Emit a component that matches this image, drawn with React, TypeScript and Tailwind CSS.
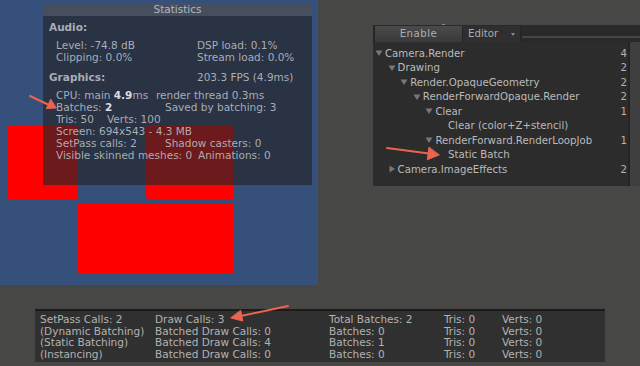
import React from "react";

const font = { fontFamily: '"DejaVu Sans", Verdana, sans-serif' };

function Tri({ open = true }: { open?: boolean }) {
  return (
    <svg width="8" height="8" viewBox="0 0 8 8" className="shrink-0">
      {open ? <path d="M0.5 1.5 L7.5 1.5 L4 7 Z" fill="#777777" /> : <path d="M1.5 0.5 L7 4 L1.5 7.5 Z" fill="#777777" />}
    </svg>
  );
}

const rows: { label: string; level: number; num?: string; tri?: "open" | "closed" }[] = [
  { label: "Camera.Render", level: 0, num: "4", tri: "open" },
  { label: "Drawing", level: 1, num: "2", tri: "open" },
  { label: "Render.OpaqueGeometry", level: 2, num: "2", tri: "open" },
  { label: "RenderForwardOpaque.Render", level: 3, num: "2", tri: "open" },
  { label: "Clear", level: 4, num: "1", tri: "open" },
  { label: "Clear (color+Z+stencil)", level: 5 },
  { label: "RenderForward.RenderLoopJob", level: 4, num: "1", tri: "open" },
  { label: "Static Batch", level: 5 },
  { label: "Camera.ImageEffects", level: 1, num: "2", tri: "closed" },
];

const bottomRows = [
  ["SetPass Calls: 2", "Draw Calls: 3", "Total Batches: 2", "Tris: 0", "Verts: 0"],
  ["(Dynamic Batching)", "Batched Draw Calls: 0", "Batches: 0", "Tris: 0", "Verts: 0"],
  ["(Static Batching)", "Batched Draw Calls: 4", "Batches: 1", "Tris: 0", "Verts: 0"],
  ["(Instancing)", "Batched Draw Calls: 0", "Batches: 0", "Tris: 0", "Verts: 0"],
];

function StatLine({ left, right, w }: { left: React.ReactNode; right?: React.ReactNode; w?: string }) {
  return (
    <div className="flex h-[12px] leading-[12px] whitespace-nowrap">
      <span className={w}>{left}</span>
      {right && <span>{right}</span>}
    </div>
  );
}

export default function App() {
  return (
    <div className="relative w-[640px] h-[366px] bg-[#474846] overflow-hidden" style={font}>
      <div className="flex h-[285px]">
        {/* game view */}
        <div className="relative w-[318px] h-[285px] bg-[#34507b] shrink-0">
          <div className="absolute left-[7px] top-[125px] w-[70px] h-[75px] bg-[#ff0000] rounded-b-[2px]" />
          <div className="absolute left-[146px] top-[125px] w-[87px] h-[74px] bg-[#ff0000] rounded-bl-[3px]" />
          <div className="absolute left-[77px] top-[203px] w-[79px] h-[70px] bg-[#ff0000] rounded-l-[3px]" />
          <div className="absolute left-[156px] top-[203px] w-[77px] h-[70px] bg-[#ff0000]" />

          {/* statistics overlay */}
          <div className="absolute left-[43px] top-[3px] w-[269px] h-[182px] bg-[rgba(38,39,42,0.68)] text-[10.5px] text-[rgba(205,210,218,0.78)]">
            <div className="h-[13px] leading-[13px] text-center bg-[rgba(100,108,122,0.5)] text-[rgba(205,210,218,0.82)]">Statistics</div>
            <div className="pt-[5px] pl-[6px]">
              <div className="h-[12px] leading-[12px] font-bold">Audio:</div>
              <div className="pl-[7px] mt-[6px]">
                <StatLine w="w-[141px]" left="Level: -74.8 dB" right="DSP load: 0.1%" />
                <StatLine w="w-[141px]" left="Clipping: 0.0%" right="Stream load: 0.0%" />
              </div>
              <div className="flex h-[12px] leading-[12px] mt-[8px]">
                <span className="w-[148px] font-bold">Graphics:</span>
                <span>203.3 FPS (4.9ms)</span>
              </div>
              <div className="pl-[7px] mt-[6px]">
                <StatLine
                  w="w-[100px]"
                  left={
                    <>
                      CPU: main <b className="text-[#dadde2]">4.9</b>ms
                    </>
                  }
                  right="render thread 0.3ms"
                />
                <StatLine
                  w="w-[109px]"
                  left={
                    <>
                      Batches: <b className="text-[#dadde2]">2</b>
                    </>
                  }
                  right="Saved by batching: 3"
                />
                <StatLine w="w-[51px]" left="Tris: 50" right="Verts: 100" />
                <StatLine left="Screen: 694x543 - 4.3 MB" />
                <StatLine w="w-[109px]" left="SetPass calls: 2" right="Shadow casters: 0" />
                <StatLine w="w-[142px]" left="Visible skinned meshes: 0" right="Animations: 0" />
              </div>
            </div>
          </div>
        </div>

        {/* profiler hierarchy */}
        <div className="flex-1 pl-[55px] pt-[25px]">
          <div className="relative h-[1px] w-full bg-[#2a2a2a]">
            <div className="absolute left-[69px] -top-[1px] w-[3px] h-[1px] bg-[#8a8a8a]" />
          </div>
          <div className="flex h-[16px] bg-[#262626] text-[10.2px] text-[#acacac]">
            <div className="w-[87px] ml-[2px] h-full flex items-center justify-center bg-gradient-to-b from-[#4b4b4b] to-[#393939] tracking-[0.5px]">
              Enable
            </div>
            <div className="w-[57px] ml-[1px] h-full flex items-center pl-[5px] bg-[#2f2f2f] relative">
              Editor
              <span className="absolute right-[5px] top-[7px] w-0 h-0 border-l-[2px] border-r-[2px] border-t-[3px] border-l-transparent border-r-transparent border-t-[#8a8a8a]" />
            </div>
            <div className="flex-1 ml-[2px] flex items-end pb-[4px] bg-[#2a2a2a]">
              <div className="w-full h-[2px] bg-[#454545] rounded-l-full" />
            </div>
          </div>
          <div className="flex">
            <div className="w-[257px] h-[144px] bg-[#2c2c2c] border-r-2 border-[#242424] pt-[4px] text-[10.2px] text-[#bababa]">
              {rows.map((r) => (
                <div key={r.label} className="flex items-center h-[14.5px] whitespace-nowrap">
                  <div className="flex items-center" style={{ paddingLeft: 2 + r.level * 12.6 }}>
                    {r.tri ? <Tri open={r.tri === "open"} /> : <span className="w-[8px]" />}
                    <span className="ml-[2px]">{r.label}</span>
                  </div>
                  <span className="ml-auto pr-[1px] text-[#b4b4b4]">{r.num}</span>
                </div>
              ))}
            </div>
            <div className="flex-1 h-[144px] bg-[#3f3f3f]" />
          </div>
        </div>
      </div>

      {/* bottom stats */}
      <div className="pl-[35px] pt-[24px]">
        <div className="w-[570px] h-[53px] border-t-2 border-[#1b1b1b] bg-[#303030] pt-[3px] pl-[5px] text-[10.5px] text-[#b3b3b3]">
          {bottomRows.map((r, i) => (
            <div key={i} className="flex h-[11.5px] leading-[11.5px] whitespace-nowrap">
              <span className="w-[115px]">{r[0]}</span>
              <span className="w-[174px]">{r[1]}</span>
              <span className="w-[115px]">{r[2]}</span>
              <span className="w-[58px]">{r[3]}</span>
              <span>{r[4]}</span>
            </div>
          ))}
        </div>
      </div>

      {/* annotation arrows */}
      <svg className="absolute inset-0 pointer-events-none" width="640" height="366" viewBox="0 0 640 366">
        <g stroke="#ec6450" strokeWidth="2" strokeLinecap="round" fill="#ec6450">
          <line x1="30" y1="96" x2="48" y2="104.5" />
          <path d="M56 108 L46.4 108.5 L50.6 99.4 Z" strokeWidth="1" strokeLinejoin="round" />
          <line x1="387" y1="148" x2="429" y2="153.5" />
          <path d="M439 155 L427.3 159.8 L428.9 147.4 Z" strokeWidth="1" strokeLinejoin="round" />
          <line x1="288" y1="306" x2="241" y2="316" />
          <path d="M231 318 L242.8 321 L240.7 310.6 Z" strokeWidth="1" strokeLinejoin="round" />
        </g>
      </svg>
    </div>
  );
}
